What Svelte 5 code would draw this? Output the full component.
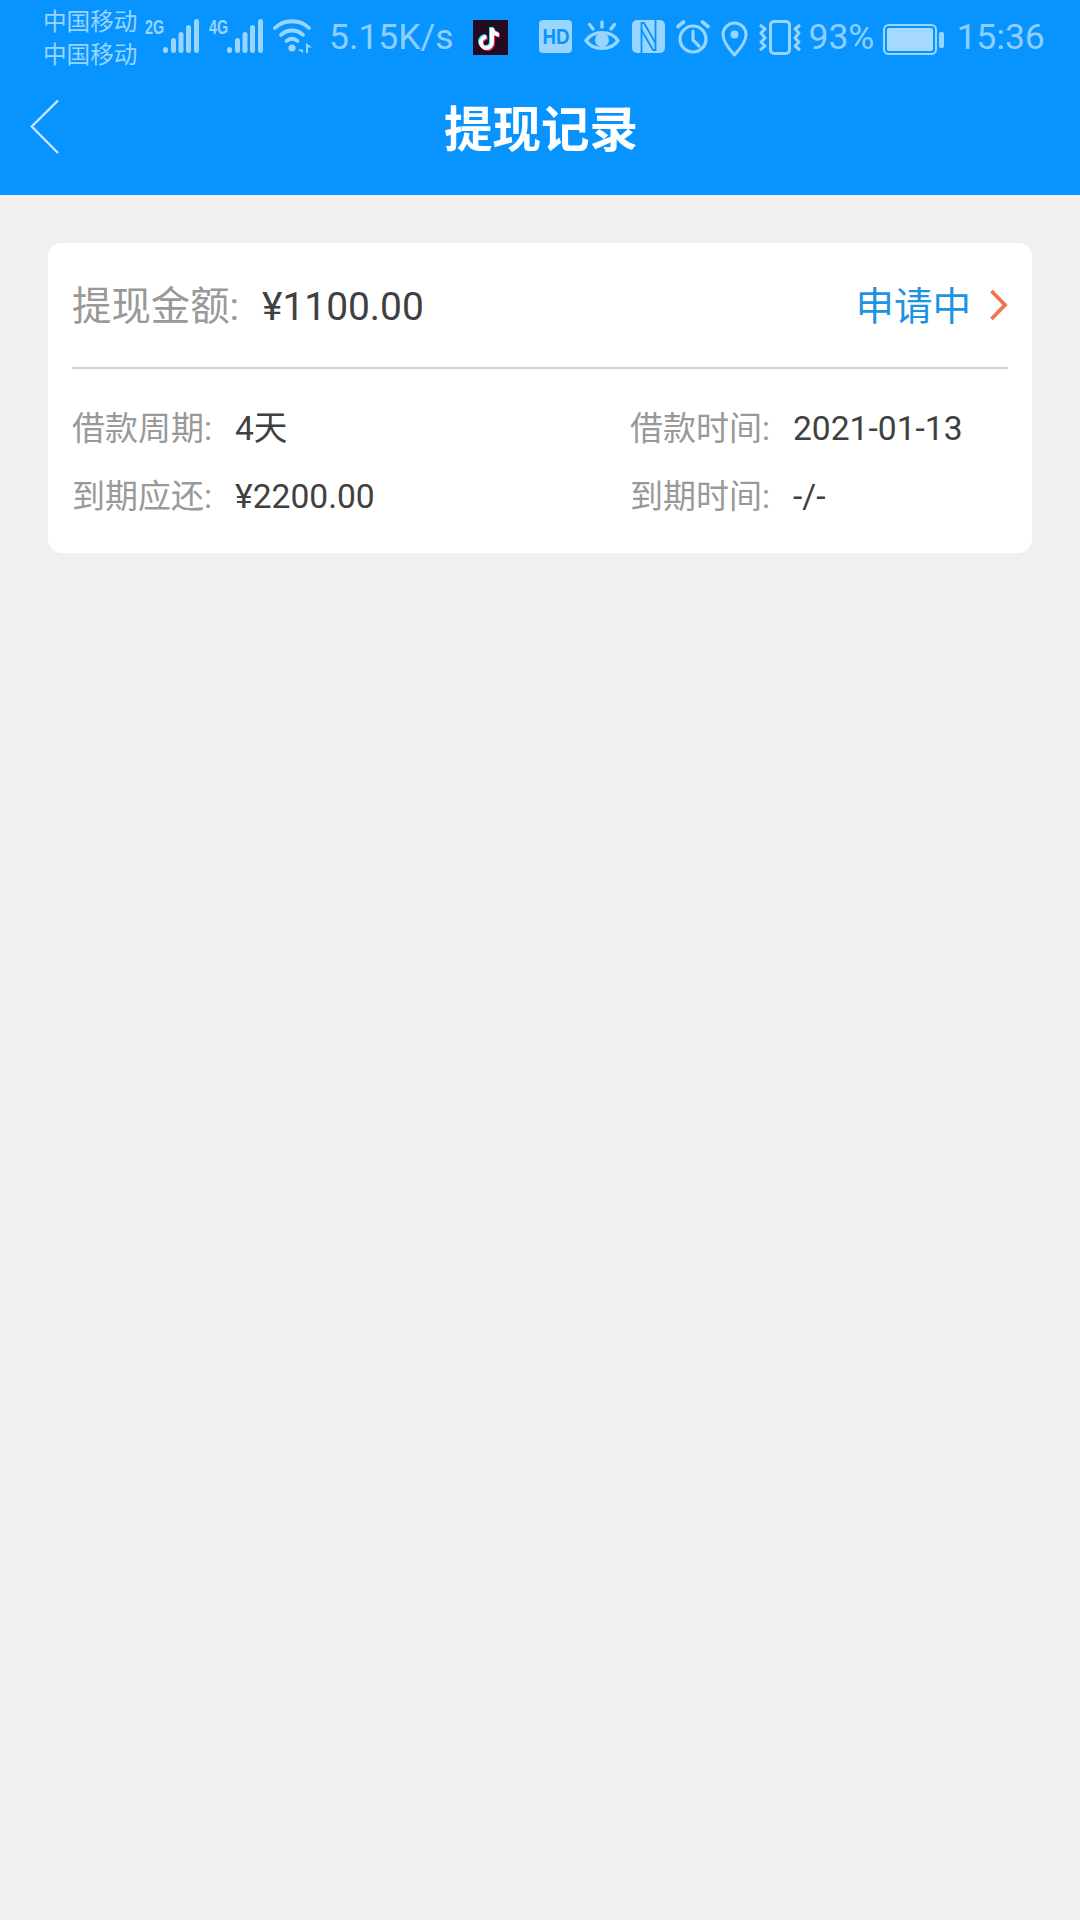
<script>
  const rows = [
    [
      { label: '借款周期:', value: '4天' },
      { label: '借款时间:', value: '2021-01-13' }
    ],
    [
      { label: '到期应还:', value: '¥2200.00' },
      { label: '到期时间:', value: '-/-' }
    ]
  ];
</script>

<div class="page">
  <header class="top">
    <div class="status">
      <div class="carriers"><span>中国移动</span><span>中国移动</span></div>

      <svg class="net net-first" width="56" height="49" viewBox="0 -9 56 49">
        <text x="0" y="15" class="gen" textLength="19" lengthAdjust="spacingAndGlyphs">2G</text>
        <g fill="#99d5ff">
          <rect x="18" y="28" width="5" height="6" rx="2.5"/>
          <rect x="26" y="19" width="5" height="15" rx="2.5"/>
          <rect x="33.500" y="13" width="5" height="21" rx="2.5"/>
          <rect x="41" y="6" width="5" height="28" rx="2.5"/>
          <rect x="49" y="0" width="5" height="34" rx="2.5"/>
        </g>
      </svg>
      <svg class="net net-second" width="56" height="49" viewBox="0 -9 56 49">
        <text x="0" y="15" class="gen" textLength="19" lengthAdjust="spacingAndGlyphs">4G</text>
        <g fill="#99d5ff">
          <rect x="18" y="28" width="5" height="6" rx="2.500"/>
          <rect x="26" y="19" width="5" height="15" rx="2.500"/>
          <rect x="33.500" y="13" width="5" height="21" rx="2.500"/>
          <rect x="41" y="6" width="5" height="28" rx="2.500"/>
          <rect x="49" y="0" width="5" height="34" rx="2.500"/>
        </g>
      </svg>

      <svg class="wifi" width="40" height="36" viewBox="0 0 40 36">
        <g fill="none" stroke="#99d5ff" stroke-width="3.800" stroke-linecap="round">
          <path d="M2 10 C11 1 27 1 36 10"/>
          <path d="M8 17 C14 11 24 11 30 17"/>
          <path d="M13.500 23 C16.500 20 21.500 20 24.500 23"/>
        </g>
        <circle cx="19" cy="30" r="3.600" fill="#99d5ff"/>
        <path d="M30 25 V35 L24.500 31.500 H30 Z M33 25 L39 29.500 H35 V35 H33 Z" fill="#99d5ff"/>
      </svg>

      <span class="st-text speed">5.15K/s</span>

      <svg class="tiktok" width="35" height="35" viewBox="0 0 35 35">
        <rect width="35" height="35" fill="#230b22"/>
        <g fill="none" stroke-width="4">
          <path d="M19 8 V22.500 A5.500 5.500 0 1 1 13.500 17" stroke="#2fe6e6" transform="translate(-1 -1)"/>
          <path d="M19 8 C19.500 12 22.500 14.500 26 14.800" stroke="#2fe6e6" transform="translate(-1 -1)"/>
          <path d="M19 8 V22.500 A5.500 5.500 0 1 1 13.500 17" stroke="#f0204e" transform="translate(1 1)"/>
          <path d="M19 8 C19.500 12 22.500 14.500 26 14.800" stroke="#f0204e" transform="translate(1 1)"/>
          <path d="M19 8 V22.500 A5.500 5.500 0 1 1 13.500 17" stroke="#ffffff"/>
          <path d="M19 8 C19.500 12 22.500 14.500 26 14.800" stroke="#ffffff"/>
        </g>
      </svg>

      <div class="hd"><span>HD</span></div>

      <svg class="eye" width="36" height="34" viewBox="0 0 36 34">
        <g fill="none" stroke="#99d5ff" stroke-width="3.400" stroke-linecap="round">
          <path d="M2 20.500 C9 10 27 10 34 20.500 C27 31 9 31 2 20.500 Z"/>
          <path d="M18 2 V7"/>
          <path d="M5.500 4.500 L9 9"/>
          <path d="M30.500 4.500 L27 9"/>
        </g>
        <circle cx="18" cy="20" r="7" fill="#99d5ff"/>
      </svg>

      <svg class="nfc" width="33" height="33" viewBox="0 0 33 33">
        <rect width="33" height="33" rx="5" fill="#99d5ff"/>
        <g fill="none" stroke="#0894ff" stroke-width="1.800">
          <path d="M9.500 33 V3 H12 L24 24"/>
          <path d="M23.500 0 V30 H21 L9.500 10"/>
        </g>
      </svg>

      <svg class="alarm" width="34" height="34" viewBox="0 0 34 34">
        <g fill="none" stroke="#99d5ff" stroke-linecap="round" stroke-linejoin="round">
          <circle cx="17" cy="19" r="13" stroke-width="3.200"/>
          <path d="M17 11 V20 L23 26" stroke-width="3.200"/>
          <path d="M2 6.500 L7.500 2" stroke-width="3.600"/>
          <path d="M32 6.500 L26.500 2" stroke-width="3.600"/>
        </g>
      </svg>

      <svg class="pin" width="27" height="36" viewBox="0 0 27 36">
        <path d="M13.500 34 C7 27 2 20.500 2 13.500 A11.500 11.500 0 0 1 25 13.500 C25 20.500 20 27 13.500 34 Z" fill="none" stroke="#99d5ff" stroke-width="3" stroke-linejoin="round"/>
        <circle cx="13.500" cy="13.500" r="4" fill="#99d5ff"/>
      </svg>

      <svg class="vibrate" width="43" height="35" viewBox="0 0 43 35">
        <rect x="11.500" y="1.500" width="19" height="32" rx="3.500" fill="none" stroke="#99d5ff" stroke-width="3"/>
        <g fill="none" stroke="#99d5ff" stroke-width="3" stroke-linejoin="round">
          <path d="M1 5 L6 9 L2 13 L6 18 L2 22 L6 26 L1 30"/>
          <path d="M41 5 L36 9 L40 13 L36 18 L40 22 L36 26 L41 30"/>
        </g>
      </svg>

      <span class="st-text pct">93%</span>

      <svg class="battery" width="61" height="31" viewBox="0 0 61 31">
        <rect x="1" y="1" width="52" height="29" rx="4.500" fill="none" stroke="#99d5ff" stroke-width="2"/>
        <rect x="4" y="4" width="46" height="23" rx="2" fill="#a6d9ff"/>
        <rect x="56" y="8" width="5" height="16" rx="2" fill="#99d5ff"/>
      </svg>

      <span class="st-text time">15:36</span>
    </div>

    <div class="nav">
      <svg class="back" width="30" height="56" viewBox="0 0 30 56">
        <path d="M28 1.500 L1.800 27.500 L28 54" fill="none" stroke="#c8e7ff" stroke-width="2.400"/>
      </svg>
      <h1>提现记录</h1>
      <span></span>
    </div>
  </header>

  <main class="content">
    <section class="card">
      <div class="head">
        <div class="amount">
          <span class="amount-label">提现金额:</span>
          <span class="amount-value">¥1100.00</span>
        </div>
        <div class="state">
          <span>申请中</span>
          <svg width="19" height="32" viewBox="0 0 19 32">
            <path d="M2.500 2 L16 16 L2.500 30" fill="none" stroke="#f0744f" stroke-width="3.800"/>
          </svg>
        </div>
      </div>
      <div class="details">
        {#each rows as row}
          {#each row as cell}
            <div class="cell">
              <span class="cell-label">{cell.label}</span>
              <span class="cell-value">{cell.value}</span>
            </div>
          {/each}
        {/each}
      </div>
    </section>
  </main>
</div>

<style>
  :global(body) {
    margin: 0;
    background: #f0f0f0;
  }
  .page {
    min-height: 1920px;
    background: #f0f0f0;
    font-family: Roboto, "Noto Sans CJK SC", sans-serif;
  }
  .top {
    background: #0894ff;
    height: 195px;
  }
  .status {
    height: 70px;
    display: flex;
    align-items: center;
    padding-left: 43px;
    color: #99d5ff;
  }
  .status svg {
    flex: none;
    display: block;
  }
  .carriers {
    display: flex;
    flex-direction: column;
    width: 94px;
    font-size: 23.6px;
    line-height: 33px;
    margin-top: 7px;
    flex: none;
  }
  .carriers span {
    white-space: nowrap;
  }
  .gen {
    font-family: "Liberation Sans", sans-serif;
    font-weight: 700;
    font-size: 20px;
    fill: #99d5ff;
  }
  .net {
    align-self: flex-start;
    margin-top: 10px;
  }
  .net-first {
    margin-left: 8px;
  }
  .net-second {
    margin-left: 8px;
  }
  .wifi {
    margin-left: 8px;
    margin-top: 2px;
  }
  .st-text {
    font-size: 35.5px;
    font-weight: 400;
    color: #8ecfff;
    line-height: 40px;
    white-space: nowrap;
    flex: none;
    margin-top: 4px;
  }
  .speed {
    margin-left: 16px;
  }
  .tiktok {
    margin-left: 20px;
    margin-top: 5px;
  }
  .hd {
    margin-left: 31px;
    width: 33px;
    height: 33px;
    border-radius: 4px;
    background: #99d5ff;
    color: #0894ff;
    display: flex;
    align-items: center;
    justify-content: center;
    font-family: "Liberation Sans", sans-serif;
    font-size: 22px;
    font-weight: 700;
    flex: none;
    margin-top: 3px;
  }
  .hd span {
    transform: scaleX(0.85);
  }
  .eye {
    margin-left: 12px;
    margin-top: 3px;
  }
  .nfc {
    margin-left: 12px;
    margin-top: 3px;
  }
  .alarm {
    margin-left: 11px;
    margin-top: 3px;
  }
  .pin {
    margin-left: 11px;
    margin-top: 7px;
  }
  .vibrate {
    margin-left: 11px;
    margin-top: 5px;
  }
  .pct {
    margin-left: 6px;
  }
  .battery {
    margin-left: 9px;
    margin-top: 8px;
  }
  .time {
    margin-left: 12px;
  }
  .nav {
    height: 121px;
    padding-bottom: 4px;
    display: grid;
    grid-template-columns: 1fr auto 1fr;
    align-items: center;
  }
  .back {
    margin-left: 30px;
    margin-bottom: 8px;
    display: block;
  }
  h1 {
    margin: 0 0 0 2px;
    font-size: 48.5px;
    line-height: 60px;
    font-weight: 700;
    color: #fff;
  }
  .content {
    padding: 48px 48px 0;
  }
  .card {
    height: 310px;
    box-sizing: border-box;
    background: #fff;
    border-radius: 14px;
    padding: 0 24px;
  }
  .head {
    height: 126px;
    box-sizing: border-box;
    display: flex;
    align-items: center;
    justify-content: space-between;
    border-bottom: 2px solid #d2d2d2;
    padding-top: 4px;
  }
  .amount {
    display: flex;
    align-items: baseline;
    line-height: 50px;
  }
  .amount-label {
    font-size: 39.4px;
    color: #999;
    width: 190px;
  }
  .amount-value {
    font-size: 38.9px;
    color: #404040;
  }
  .state {
    display: flex;
    align-items: center;
    gap: 18px;
    color: #1d93e3;
    font-size: 38.5px;
    line-height: 50px;
  }
  .state svg {
    display: block;
    margin-bottom: 5px;
  }
  .details {
    display: grid;
    grid-template-columns: 558px 1fr;
    grid-auto-rows: 68px;
    padding-top: 26px;
  }
  .cell {
    display: flex;
    align-items: baseline;
    line-height: 68px;
  }
  .cell-label {
    width: 163px;
    color: #999;
    font-size: 33px;
  }
  .cell-value {
    color: #404040;
    font-size: 33.6px;
  }
</style>
